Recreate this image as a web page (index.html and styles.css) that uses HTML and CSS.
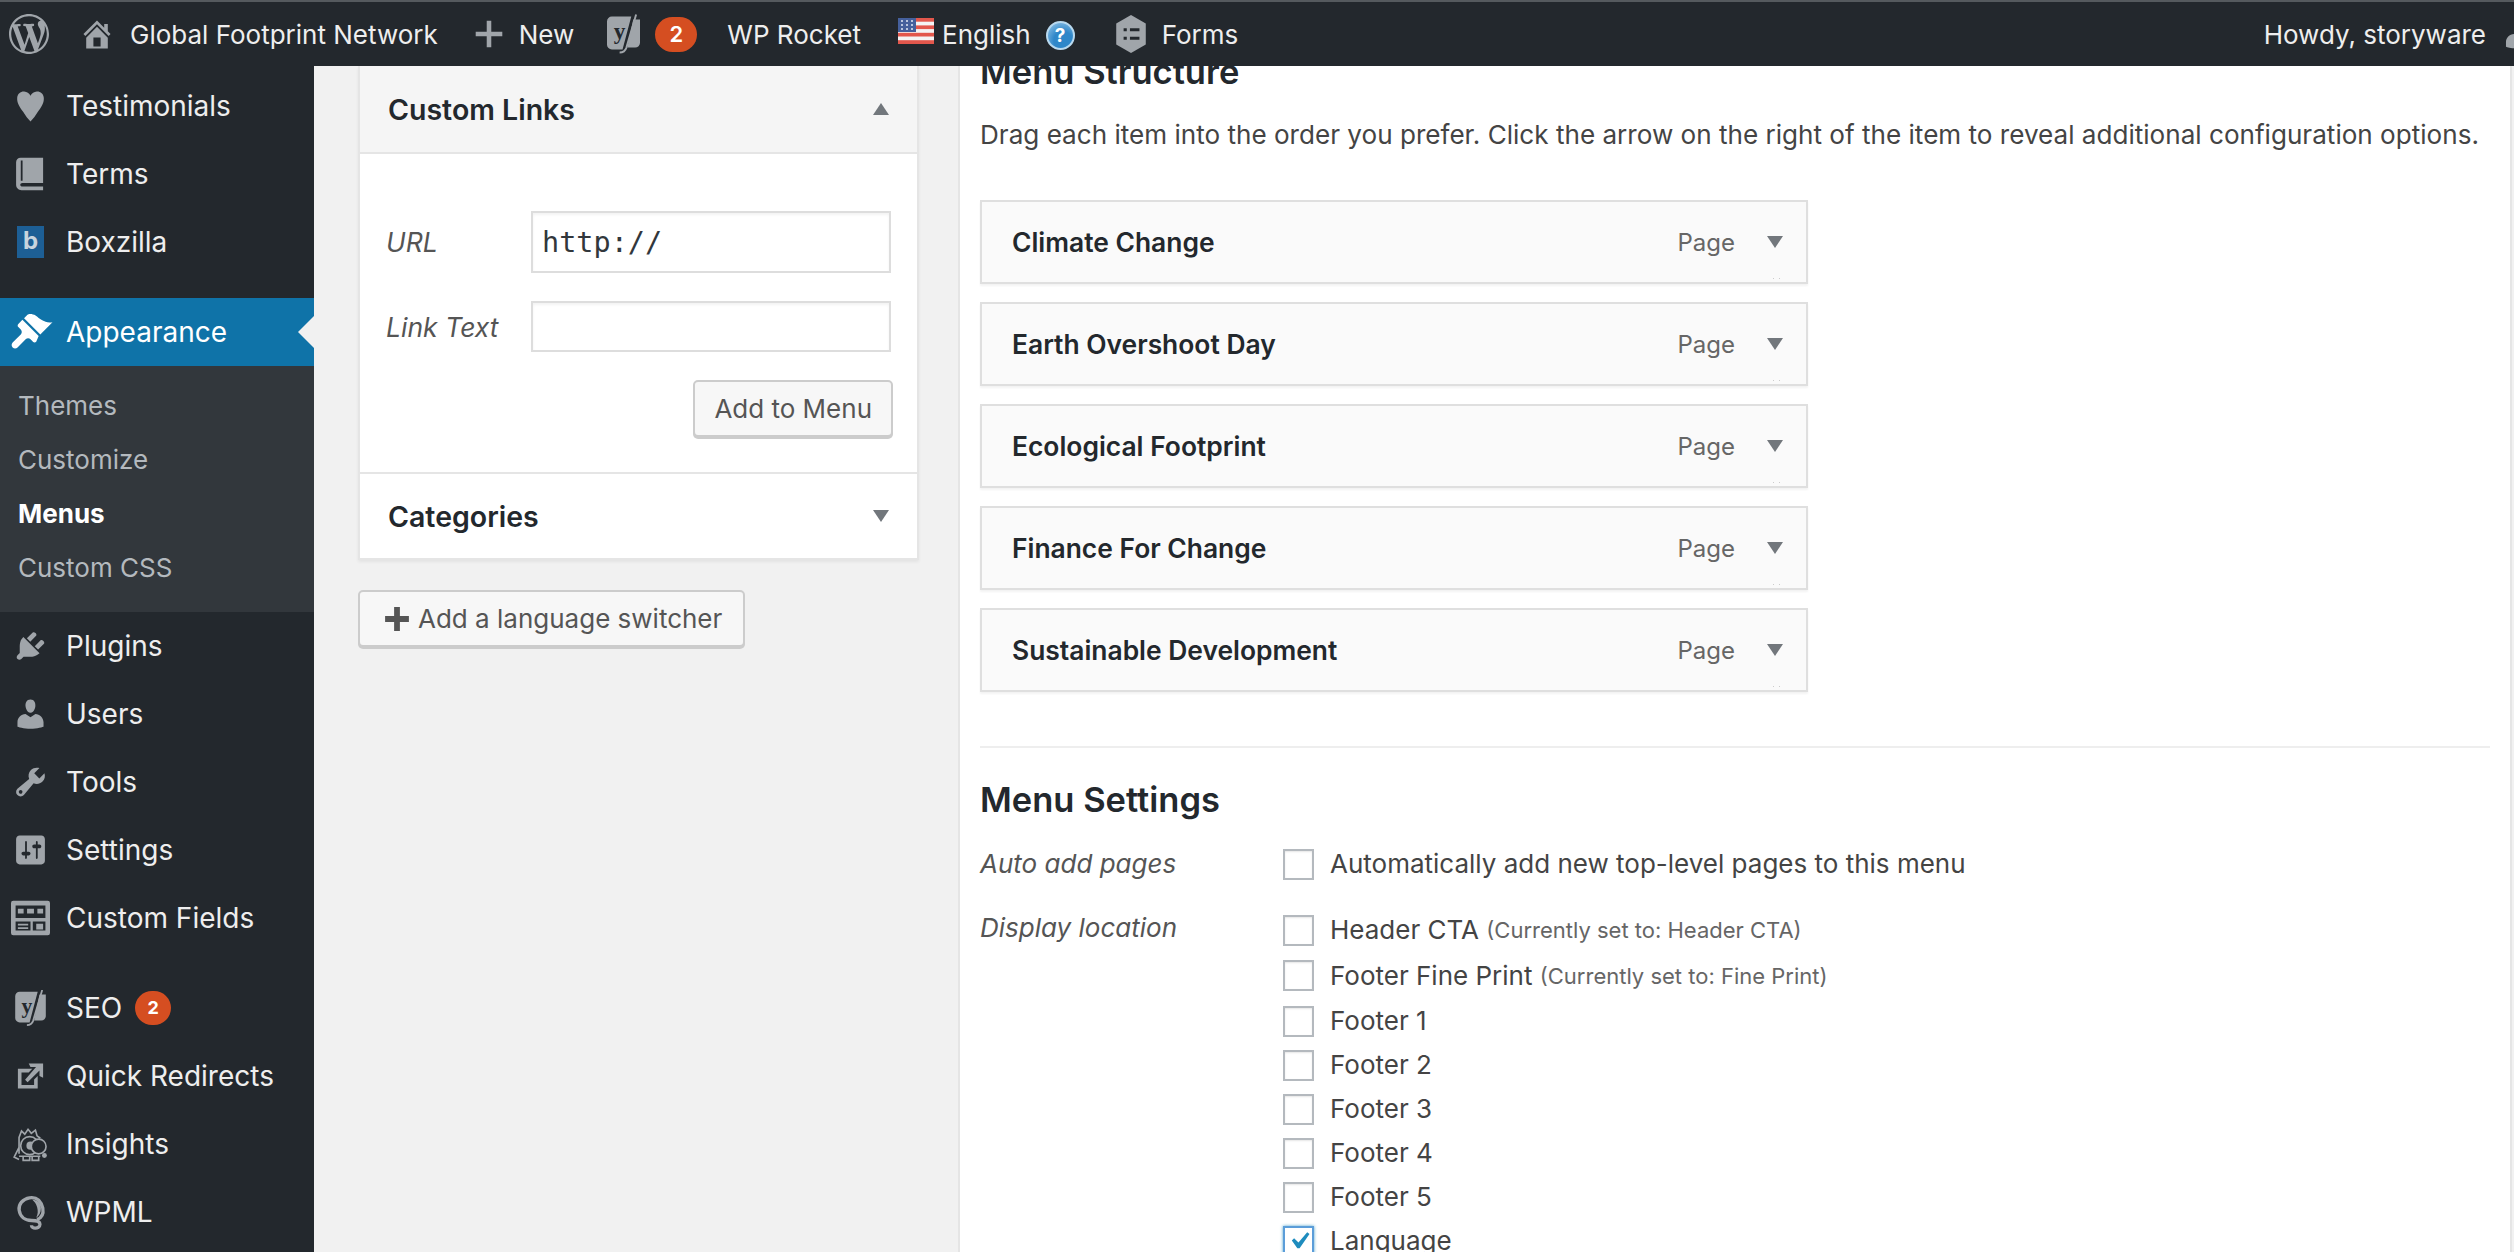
FILE: index.html
```html
<!DOCTYPE html>
<html lang="en">
<head>
  <meta charset="UTF-8">
  <title>Menus</title>
  <link rel="stylesheet" href="styles.css">
</head>
<body>

<!-- Admin bar -->
<header class="topbar">
  <svg class="bar-icon logo" viewBox="0 0 20 20"><path d="M20 10c0-5.51-4.49-10-10-10C4.48 0 0 4.49 0 10c0 5.52 4.48 10 10 10 5.51 0 10-4.48 10-10zM7.78 15.37L4.37 6.22c.55-.02 1.17-.08 1.17-.08.5-.06.44-1.13-.06-1.11 0 0-1.45.11-2.37.11-.18 0-.37 0-.58-.01C4.12 2.69 6.87 1.11 10 1.11c2.33 0 4.45.87 6.05 2.34-.68-.11-1.65.39-1.65 1.58 0 .74.45 1.36.9 2.1.35.61.55 1.36.55 2.46 0 1.49-1.4 5-1.4 5l-3.03-8.37c.54-.02.82-.17.82-.17.5-.05.44-1.25-.06-1.22 0 0-1.44.12-2.38.12-.87 0-2.33-.12-2.33-.12-.5-.03-.56 1.2-.06 1.22l.92.08 1.26 3.41zM17.41 10c.24-.64.74-1.87.43-4.25.7 1.29 1.05 2.71 1.05 4.25 0 3.29-1.73 6.24-4.4 7.78.97-2.59 1.94-5.2 2.92-7.78zM6.1 18.09C3.12 16.65 1.11 13.53 1.11 10c0-1.3.23-2.48.72-3.59C3.25 10.3 4.67 14.2 6.1 18.09zm4.03-6.63l2.58 6.98c-.86.29-1.76.45-2.71.45-.79 0-1.57-.11-2.29-.33.81-2.38 1.62-4.74 2.42-7.1z"/></svg>
  <svg class="bar-icon home" viewBox="0 0 20 20"><path d="M16 8.5l1.53 1.53-1.06 1.06L10 4.62l-6.47 6.47-1.06-1.06L10 2.5l4 4v-2h2v4zm-6-2.46l6 5.99V18H4v-5.97zM12 17v-5H8v5h4z"/></svg>
  <span class="bar-text site">Global Footprint Network</span>
  <svg class="bar-icon plus" viewBox="0 0 20 20"><path d="M17 8.800v2.400h-5.800V17H8.800v-5.800H3V8.800h5.800V3h2.400v5.800z"/></svg>
  <span class="bar-text new">New</span>
  <svg class="bar-icon yoast" viewBox="0 0 34 40"><path d="M5 2h20l-9 34H5a5 5 0 0 1-5-5V7a5 5 0 0 1 5-5zM27 5l7 0v24a5 5 0 0 1-5 5h-8z"/><path class="yoast-slash" d="M30 0L20 34c-1 3-4 5-7 5"/><text class="yoast-y" x="7" y="25">y</text></svg>
  <span class="bar-badge">2</span>
  <span class="bar-text rocket">WP Rocket</span>
  <svg class="flag" viewBox="0 0 36 26">
    <rect width="36" height="26" fill="#f4f4f4"/>
    <rect width="36" height="3.7" fill="#e2574c"/>
    <rect y="7.4" width="36" height="3.7" fill="#e2574c"/>
    <rect y="14.8" width="36" height="3.7" fill="#e2574c"/>
    <rect y="22.2" width="36" height="3.8" fill="#e2574c"/>
    <rect width="18" height="14" fill="#45609c"/>
    <path d="M3 3h2M8 3h2M13 3h2M3 7h2M8 7h2M13 7h2M3 11h2M8 11h2M13 11h2" stroke="#dfe6f4" stroke-width="1.6"/>
  </svg>
  <span class="bar-text lang">English</span>
  <span class="help">?</span>
  <svg class="bar-icon forms" viewBox="0 0 32 36"><path d="M16 0l14 8v20l-14 8-14-8V8z"/><path class="forms-lines" d="M9 14h3M15 14h9M9 22h3M15 22h9"/></svg>
  <span class="bar-text">Forms</span>
  <span class="bar-text howdy">Howdy, storyware</span>
  <svg class="bar-icon avatar" viewBox="0 0 20 20"><path d="M10 9.25c-2.27 0-2.73-3.44-2.73-3.44C7 4.02 7.82 2 9.97 2c2.16 0 2.98 2.02 2.71 3.81 0 0-.41 3.44-2.68 3.44zm0 2.57L12.72 10c2.39 0 4.52 2.33 4.52 4.53v2.49s-3.65 1.13-7.24 1.13c-3.65 0-7.24-1.13-7.24-1.13v-2.49c0-2.25 1.94-4.48 4.47-4.48z"/></svg>
</header>

<div class="page">

  <!-- Sidebar -->
  <nav class="sidebar">
    <a class="menu-item"><svg class="menu-icon" viewBox="0 0 20 20"><path d="M10 18.6c-1.6-1.5-2.6-3-4-5.2C4.400 11 2.400 8.500 2.600 5.500 2.800 3.200 4.500 1.900 6.500 2c1.500.1 2.800 1 3.500 2.300C10.700 3 12 2.100 13.500 2c2-.1 3.700 1.200 3.900 3.500.2 3-1.800 5.500-3.400 7.900-1.400 2.200-2.400 3.700-4 5.200z"/></svg>Testimonials</a>
    <a class="menu-item"><svg class="menu-icon" viewBox="0 0 20 20"><path d="M4.500 1H17v14H5.500c-.700 0-1.200.500-1.200 1s.500 1 1.200 1H17v2H5c-1.700 0-3-1.300-3-3V3.500C2 2.100 3.100 1 4.500 1zM4.600 2.500v11.200h1V2.500z"/></svg>Terms</a>
    <a class="menu-item"><span class="boxzilla">b</span>Boxzilla</a>

    <a class="menu-item current"><svg class="menu-icon brush" viewBox="0 0 20 20"><path d="M14.480 11.060L7.410 3.990l1.500-1.500c.5-.560 2.300-.470 3.510.320 1.210.800 1.430 1.280 2.910 2.100 1.180.640 2.450 1.260 4.450.85zm-.710.710L6.700 4.700 4.930 6.470c-.390.390-.390 1.020 0 1.410l1.060 1.060c.590.590.590 1.540 0 2.120l-3.530 3.530c-.590.590-.590 1.540 0 2.120.590.590 1.540.590 2.120 0l3.530-3.530c.590-.590 1.540-.590 2.120 0l1.060 1.060c.390.390 1.020.390 1.410 0z"/></svg>Appearance</a>
    <div class="submenu">
      <a class="sub-item">Themes</a>
      <a class="sub-item">Customize</a>
      <a class="sub-item active">Menus</a>
      <a class="sub-item">Custom CSS</a>
    </div>

    <a class="menu-item"><svg class="menu-icon" viewBox="0 0 20 20"><path d="M13.110 4.360L9.870 7.600 8 5.730l3.240-3.240c.350-.340 1.050-.2 1.560.320.520.510.660 1.210.310 1.550zm-8 1.770l.910-1.120 9.010 9.010-1.190.840c-.710.710-2.630 1.160-3.820 1.160H6.140L4.900 17.260c-.590.590-1.540.590-2.120 0-.590-.580-.590-1.530 0-2.120l1.240-1.240v-3.880c0-1.130.4-3.190 1.090-3.890zm7.260 3.970l3.240-3.240c.340-.350 1.040-.210 1.550.310.520.510.660 1.210.310 1.550l-3.240 3.250z"/></svg>Plugins</a>
    <a class="menu-item"><svg class="menu-icon" viewBox="0 0 20 20"><path d="M10 9.250c-2.270 0-2.730-3.440-2.730-3.440C7 4.020 7.820 2 9.970 2c2.160 0 2.980 2.020 2.710 3.810 0 0-.410 3.440-2.680 3.440zm0 2.570L12.720 10c2.390 0 4.520 2.330 4.520 4.530v2.490s-3.650 1.130-7.240 1.130c-3.650 0-7.240-1.130-7.240-1.130v-2.490c0-2.250 1.940-4.480 4.470-4.480z"/></svg>Users</a>
    <a class="menu-item"><svg class="menu-icon" viewBox="0 0 20 20"><path d="M16.680 9.770c-1.340 1.340-3.300 1.670-4.950.990l-5.410 6.520c-.990.990-2.590.990-3.580 0s-.990-2.590 0-3.570l6.520-5.420c-.680-1.650-.350-3.610.990-4.950 1.280-1.280 3.120-1.620 4.720-1.060l-2.890 2.890 2.820 2.820 2.860-2.870c.530 1.580.180 3.390-1.080 4.650zM3.810 16.210c.4.390 1.040.390 1.430 0 .4-.4.4-1.040 0-1.430-.390-.4-1.030-.4-1.430 0-.390.390-.390 1.030 0 1.430z"/></svg>Tools</a>
    <a class="menu-item"><svg class="menu-icon" viewBox="0 0 20 20"><path d="M18 16V4c0-1.100-.9-2-2-2H4c-1.100 0-2 .9-2 2v12c0 1.100.9 2 2 2h12c1.100 0 2-.9 2-2zM8 11h1c.550 0 1 .450 1 1s-.450 1-1 1H8v1.500c0 .280-.220.5-.5.5s-.5-.220-.5-.5V13H6c-.550 0-1-.450-1-1s.450-1 1-1h1V5.500c0-.280.220-.5.5-.5s.5.220.5.5V11zm5-2h-1c-.550 0-1-.450-1-1s.450-1 1-1h1V5.500c0-.280.220-.5.5-.5s.5.220.5.5V7h1c.550 0 1 .450 1 1s-.450 1-1 1h-1v5.500c0 .280-.220.5-.5.5s-.5-.220-.5-.5V9z"/></svg>Settings</a>
    <a class="menu-item"><svg class="menu-icon" viewBox="0 0 34 30"><path fill-rule="evenodd" d="M2 0h30a2 2 0 0 1 2 2v26a2 2 0 0 1-2 2H2a2 2 0 0 1-2-2V2a2 2 0 0 1 2-2zM4 4v11h26V4zM6 7h5v4H6zM14 7h6v4h-6zM23 7h5v4h-5zM4 18v8h13v-8zM19 18v8h11v-8zM6 20h9v1.500H6zM6 23h9v1.500H6zM22 20h6v5h-6z"/></svg>Custom Fields</a>

    <a class="menu-item seo"><svg class="menu-icon" viewBox="0 0 34 40"><path d="M5 2h20l-9 34H5a5 5 0 0 1-5-5V7a5 5 0 0 1 5-5zM27 5l7 0v24a5 5 0 0 1-5 5h-8z"/><path class="yoast-slash" d="M30 0L20 34c-1 3-4 5-7 5"/><text class="yoast-y" x="7" y="25">y</text></svg>SEO<span class="menu-badge">2</span></a>
    <a class="menu-item"><svg class="menu-icon" viewBox="0 0 20 20"><path d="M9 3h8v8l-2-1V6.920l-6.600 6.590-1.410-1.410L13.080 5H10zm3 12v-3l2-2v7H3V6h8L9 8H5v7h7z"/></svg>Quick Redirects</a>
    <a class="menu-item"><svg class="menu-icon insights" viewBox="0 0 44 44"><path class="outline" d="M8 34V14l3-8 4 4 4-6 4 5 5-4 2 7 4 3M8 26L2 38l6 3M8 37h26M13 37v5h8v-5M24 37v5h8v-5"/><circle class="outline" cx="21" cy="24" r="11"/><circle cx="22" cy="24" r="5"/><circle class="outline fill-bg" cx="32" cy="25" r="9"/><circle cx="39" cy="36" r="3"/></svg>Insights</a>
    <a class="menu-item"><svg class="menu-icon" viewBox="0 0 32 38"><path class="swirl" d="M23 27c5-2 7-6 6-12C27 7 22 3 15 4 8 5 3 11 4 17c1 7 6 11 13 11 5 0 9 1 9 4 0 3-3 4-5 4s-4-1-4-3"/><path class="swirl-fill" d="M18 6c6 0 9 4 9 9s-2 8-5 10c2-4 2-7 1-11-1-4-3-6-5-8z"/></svg>WPML</a>
  </nav>

  <main class="content">

    <!-- Left column -->
    <section class="left-col">
      <div class="accordion">
        <div class="acc-head open">
          <h3>Custom Links</h3>
          <span class="tri up"></span>
        </div>
        <div class="acc-body">
          <div class="field url">
            <label>URL</label>
            <input class="text-input tall" type="text" value="http://">
          </div>
          <div class="field">
            <label>Link Text</label>
            <input class="text-input" type="text">
          </div>
          <div class="btn-row">
            <button class="btn">Add to Menu</button>
          </div>
        </div>
        <div class="acc-head">
          <h3>Categories</h3>
          <span class="tri down"></span>
        </div>
      </div>
      <button class="btn switcher"><svg class="btn-plus" viewBox="0 0 20 20"><path d="M17 8.300v3.400h-5.300V17H8.300v-5.300H3V8.300h5.300V3h3.400v5.300z"/></svg>Add a language switcher</button>
    </section>

    <!-- Menu editor -->
    <section class="editor">
      <h3 class="cut-title">Menu Structure</h3>
      <p class="intro">Drag each item into the order you prefer. Click the arrow on the right of the item to reveal additional configuration options.</p>

      <ul class="menu-list">
        <li class="menu-row"><strong>Climate Change</strong><span class="kind">Page</span><span class="tri down small"></span></li>
        <li class="menu-row"><strong>Earth Overshoot Day</strong><span class="kind">Page</span><span class="tri down small"></span></li>
        <li class="menu-row"><strong>Ecological Footprint</strong><span class="kind">Page</span><span class="tri down small"></span></li>
        <li class="menu-row"><strong>Finance For Change</strong><span class="kind">Page</span><span class="tri down small"></span></li>
        <li class="menu-row"><strong>Sustainable Development</strong><span class="kind">Page</span><span class="tri down small"></span></li>
      </ul>

      <div class="divider"></div>

      <h3 class="settings-title">Menu Settings</h3>

      <div class="setting auto">
        <div class="setting-label">Auto add pages</div>
        <div class="checks">
          <label class="check"><span class="box"></span>Automatically add new top-level pages to this menu</label>
        </div>
      </div>

      <div class="setting">
        <div class="setting-label">Display location</div>
        <div class="checks">
          <label class="check"><span class="box"></span>Header CTA <small>(Currently set to: Header CTA)</small></label>
          <label class="check"><span class="box"></span>Footer Fine Print <small>(Currently set to: Fine Print)</small></label>
          <label class="check"><span class="box"></span>Footer 1</label>
          <label class="check"><span class="box"></span>Footer 2</label>
          <label class="check"><span class="box"></span>Footer 3</label>
          <label class="check"><span class="box"></span>Footer 4</label>
          <label class="check"><span class="box"></span>Footer 5</label>
          <label class="check"><span class="box checked"><svg viewBox="0 0 20 20"><path d="M14.830 4.890l1.340.940-5.810 8.380H9.020L5.780 9.670l1.340-1.250 2.570 2.400z"/></svg></span>Language</label>
        </div>
      </div>
    </section>

  </main>
</div>

</body>
</html>
```

FILE: styles.css
```css
* {
  box-sizing: border-box;
}

html, body {
  margin: 0;
  height: 100%;
  overflow: hidden;
}

body {
  display: flex;
  flex-direction: column;
  background: #f1f1f1;
  font-family: Inter, "Noto Sans", sans-serif;
  font-size: 26px;
  color: #444;
}

/* Admin bar */
.topbar {
  flex: none;
  position: relative;
  z-index: 5;
  height: 66px;
  display: flex;
  align-items: center;
  padding: 0 0 0 9px;
  background: #23282d;
  border-top: 2px solid #555a5e;
  color: #eee;
  font-size: 26px;
  white-space: nowrap;
}

.bar-icon {
  flex: none;
  fill: #a0a5aa;
}

.logo { width: 40px; height: 40px; }
.home { width: 36px; height: 36px; margin-left: 30px; }
.bar-text { display: block; }
.site { margin-left: 15px; }
.plus { width: 38px; height: 38px; margin-left: 32px; }
.new { margin-left: 11px; }
.yoast { width: 33px; height: 42px; margin-left: 33px; }
.yoast-slash { fill: none; stroke: #a0a5aa; stroke-width: 2; }
.yoast-y { font: 700 24px "Liberation Serif", serif; fill: #23282d; }

.bar-badge {
  width: 42px;
  height: 35px;
  margin-left: 15px;
  border-radius: 18px;
  background: #d54e21;
  color: #fff;
  font-weight: 600;
  font-size: 22px;
  line-height: 35px;
  text-align: center;
}

.rocket { margin-left: 30px; }
.flag { flex: none; width: 36px; height: 26px; margin: -6px 0 0 37px; }
.lang { margin-left: 8px; }

.help {
  flex: none;
  width: 29px;
  height: 29px;
  margin: 2px 0 0 15px;
  border-radius: 50%;
  background: radial-gradient(circle at 60% 70%, #2f87c9 40%, #8cc0e6 90%);
  border: 2px solid #b8d9ef;
  color: #fff;
  font-weight: 700;
  font-size: 19px;
  line-height: 25px;
  text-align: center;
}

.forms { width: 34px; height: 38px; margin-left: 39px; }
.forms-lines { fill: none; stroke: #23282d; stroke-width: 3; }
.forms + .bar-text { margin-left: 14px; }
.howdy { margin-left: auto; }
.avatar { width: 36px; height: 36px; margin: 0 -23px 0 15px; }

/* Page */
.page {
  flex: 1;
  min-height: 0;
  display: flex;
  overflow: hidden;
}

/* Sidebar */
.sidebar {
  flex: none;
  width: 314px;
  padding-top: 6px;
  background: #23282d;
  overflow: hidden;
}

.menu-item {
  position: relative;
  height: 68px;
  display: flex;
  align-items: center;
  gap: 16px;
  padding-left: 11px;
  color: #eee;
  font-size: 28px;
  white-space: nowrap;
}

.menu-icon {
  flex: none;
  width: 39px;
  height: 36px;
  fill: #a0a5aa;
}

.menu-icon.brush {
  width: 46px;
  height: 46px;
  margin: 0 -3px 0 -4px;
}

.boxzilla {
  flex: none;
  width: 27px;
  height: 32px;
  margin: 0 6px 0 6px;
  background: #1d5f95;
  color: #c8d4de;
  font-weight: 700;
  font-size: 24px;
  line-height: 30px;
  text-align: center;
}

.current {
  margin-top: 22px;
  background: #0f73a8;
  color: #fff;
}

.current .menu-icon {
  fill: #fff;
}

.current::after {
  content: '';
  position: absolute;
  right: 0;
  top: 50%;
  margin-top: -16px;
  border: 16px solid transparent;
  border-left-width: 0;
  border-right-color: #f1f1f1;
}

.submenu {
  height: 246px;
  padding-top: 13px;
  background: #32373c;
}

.sub-item {
  display: block;
  height: 54px;
  padding-left: 18px;
  color: #b4b9be;
  font-size: 26px;
  line-height: 54px;
}

.sub-item.active {
  color: #fff;
  font-weight: 700;
}

.seo {
  margin-top: 22px;
}

.menu-badge {
  width: 36px;
  height: 34px;
  margin-left: -3px;
  border-radius: 17px;
  background: #d54e21;
  color: #fff;
  font-weight: 700;
  font-size: 18px;
  line-height: 34px;
  text-align: center;
}

.insights { overflow: visible; }
.outline { fill: none; stroke: #a0a5aa; stroke-width: 2; }
.fill-bg { fill: #23282d; }
.swirl { fill: none; stroke: #a0a5aa; stroke-width: 3.500; }
.swirl-fill { fill: #a0a5aa; }

/* Main area */
.content {
  flex: 1;
  min-width: 0;
  display: flex;
  align-items: flex-start;
  padding-left: 44px;
}

.left-col {
  flex: none;
  width: 561px;
}

.accordion {
  background: #fff;
  border: 2px solid #e5e5e5;
  border-top: 0;
  box-shadow: 0 2px 3px rgba(0, 0, 0, 0.06);
}

.acc-head {
  height: 84px;
  display: flex;
  align-items: center;
  justify-content: space-between;
  padding: 0 28px 0 28px;
}

.acc-head.open {
  height: 88px;
  background: #f5f5f5;
  border-bottom: 2px solid #e5e5e5;
}

.acc-head h3 {
  margin: 0;
  color: #23282d;
  font-size: 28.5px;
  font-weight: 600;
}

.tri {
  width: 0;
  height: 0;
  border-left: 8px solid transparent;
  border-right: 8px solid transparent;
}

.tri.up { border-bottom: 12px solid #72777c; }
.tri.down { border-top: 12px solid #72777c; }
.tri.small { margin-left: 32px; }

.acc-body {
  height: 320px;
  padding: 57px 26px 0 26px;
  border-bottom: 2px solid #e5e5e5;
}

.field {
  display: flex;
  align-items: center;
  margin-bottom: 28px;
}

.field label {
  width: 145px;
  flex: none;
  color: #555;
  font-style: italic;
  font-size: 26.5px;
}

.text-input {
  width: 360px;
  height: 51px;
  padding: 0 9px;
  border: 2px solid #ddd;
  background: #fff;
  box-shadow: inset 0 2px 3px rgba(0, 0, 0, 0.05);
  color: #32373c;
  font-family: "DejaVu Sans Mono", monospace;
  font-size: 28.5px;
  outline: none;
}

.text-input.tall {
  height: 62px;
}

.btn-row {
  display: flex;
  justify-content: flex-end;
  margin-right: -2px;
}

.btn {
  display: flex;
  align-items: center;
  height: 57px;
  padding: 0 19px;
  background: #f7f7f7;
  border: 2px solid #ccc;
  border-radius: 5px;
  box-shadow: 0 2px 0 #ccc;
  color: #555;
  font-family: inherit;
  font-size: 26px;
}

.switcher {
  margin-top: 30px;
  padding: 0 21px 0 20px;
}

.btn-plus {
  width: 34px;
  height: 34px;
  margin-right: 4px;
  fill: #555;
}

/* Menu editor */
.editor {
  flex: 1;
  height: 1300px;
  margin: 0 2px 0 39px;
  padding: 0 20px;
  background: #fff;
  border-left: 2px solid #e5e5e5;
  border-right: 2px solid #e5e5e5;
}

.cut-title {
  margin: -14px 0 0;
  color: #23282d;
  font-size: 34.5px;
  font-weight: 600;
  line-height: 40px;
}

.intro {
  margin: 25px 0 0;
  font-size: 26.1px;
  line-height: 36px;
  white-space: nowrap;
}

.menu-list {
  list-style: none;
  margin: 47px 0 0;
  padding: 0;
}

.menu-row {
  position: relative;
  width: 828px;
  height: 84px;
  display: flex;
  align-items: center;
  margin-bottom: 18px;
  padding: 0 23px 0 30px;
  background: #fafafa;
  border: 2px solid #dfdfdf;
  box-shadow: 0 2px 2px rgba(0, 0, 0, 0.05);
}

.menu-row::after {
  content: '';
  position: absolute;
  right: 26px;
  bottom: 3px;
  width: 5px;
  height: 1px;
  border-left: 1px solid #ccc;
  border-right: 1px solid #ccc;
}

.menu-row strong {
  flex: 1;
  color: #23282d;
  font-size: 26.4px;
  font-weight: 600;
}

.kind {
  color: #666;
  font-size: 24px;
}

.divider {
  height: 2px;
  margin-top: 54px;
  background: #eee;
}

.settings-title {
  margin: 32px 0 0;
  color: #23282d;
  font-size: 34.5px;
  font-weight: 600;
  line-height: 40px;
}

.setting {
  display: flex;
  align-items: flex-start;
}

.setting.auto {
  margin: 28px 0 28px;
}

.setting-label {
  width: 303px;
  flex: none;
  color: #555;
  font-style: italic;
  line-height: 32px;
}

.setting + .setting .setting-label {
  padding-top: 4px;
}

.checks {
  display: flex;
  flex-direction: column;
}

.check {
  height: 44px;
  display: flex;
  align-items: center;
  white-space: pre;
  line-height: 32px;
}

.check:nth-child(2) {
  height: 47px;
}

.auto .check {
  height: 32px;
}

.check small {
  color: #666;
  font-size: 22px;
}

.box {
  flex: none;
  width: 31px;
  height: 31px;
  margin-right: 16px;
  background: #fff;
  border: 2px solid #b4b9be;
  box-shadow: inset 0 1px 2px rgba(0, 0, 0, 0.1);
}

.box.checked {
  border-color: #5b9dd9;
  box-shadow: 0 0 3px rgba(30, 140, 190, 0.8);
}

.box svg {
  display: block;
  width: 34px;
  height: 34px;
  margin: -4px 0 0 -3px;
  fill: #1e8cbe;
}
```
